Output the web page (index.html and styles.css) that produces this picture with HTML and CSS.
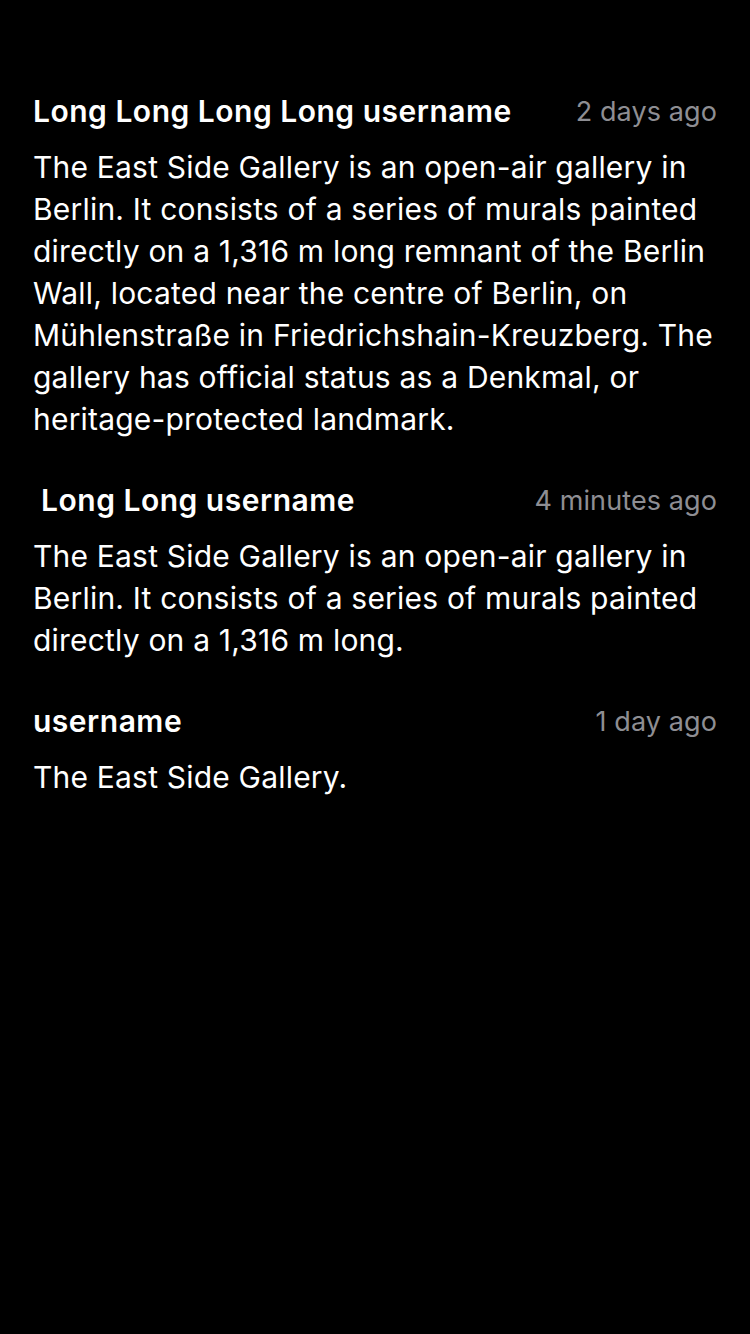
FILE: index.html
```html
<!DOCTYPE html>
<html lang="en">
<head>
<meta charset="utf-8">
<link rel="stylesheet" href="styles.css">
</head>
<body>
<main class="comments">
  <article class="comment">
    <header class="comment-head">
      <span class="user">Long Long Long Long username</span>
      <span class="time">2 days ago</span>
    </header>
    <p class="text">The East Side Gallery is an open-air gallery in Berlin. It consists of a series of murals painted directly on a 1,316 m long remnant of the Berlin Wall, located near the centre of Berlin, on Mühlenstraße in Friedrichshain-Kreuzberg. The gallery has official status as a Denkmal, or heritage-protected landmark.</p>
  </article>
  <article class="comment">
    <header class="comment-head">
      <span class="user">&nbsp;Long Long username</span>
      <span class="time">4 minutes ago</span>
    </header>
    <p class="text">The East Side Gallery is an open-air gallery in Berlin. It consists of a series of murals painted directly on a 1,316 m long.</p>
  </article>
  <article class="comment">
    <header class="comment-head">
      <span class="user">username</span>
      <span class="time">1 day ago</span>
    </header>
    <p class="text">The East Side Gallery.</p>
  </article>
</main>
</body>
</html>
```

FILE: styles.css
```css
html, body {
  margin: 0;
  padding: 0;
  background: #000;
}
body {
  width: 750px;
  height: 1334px;
  font-family: Inter, "Noto Sans", "Liberation Sans", sans-serif;
  color: #fff;
}
.comments {
  padding: 94px 33px 0;
  display: flex;
  flex-direction: column;
  gap: 43px;
}
.comment {
  display: flex;
  flex-direction: column;
  gap: 18px;
}
.comment-head {
  display: flex;
  justify-content: space-between;
  align-items: center;
  height: 34px;
}
.user {
  font-size: 30px;
  font-weight: 600;
  letter-spacing: 0.5px;
  white-space: pre;
}
.time {
  font-size: 27px;
  letter-spacing: 0.1px;
  color: #8e8e93;
}
.text {
  margin: 0;
  font-size: 30px;
  letter-spacing: 0.2px;
  line-height: 42px;
}
```
